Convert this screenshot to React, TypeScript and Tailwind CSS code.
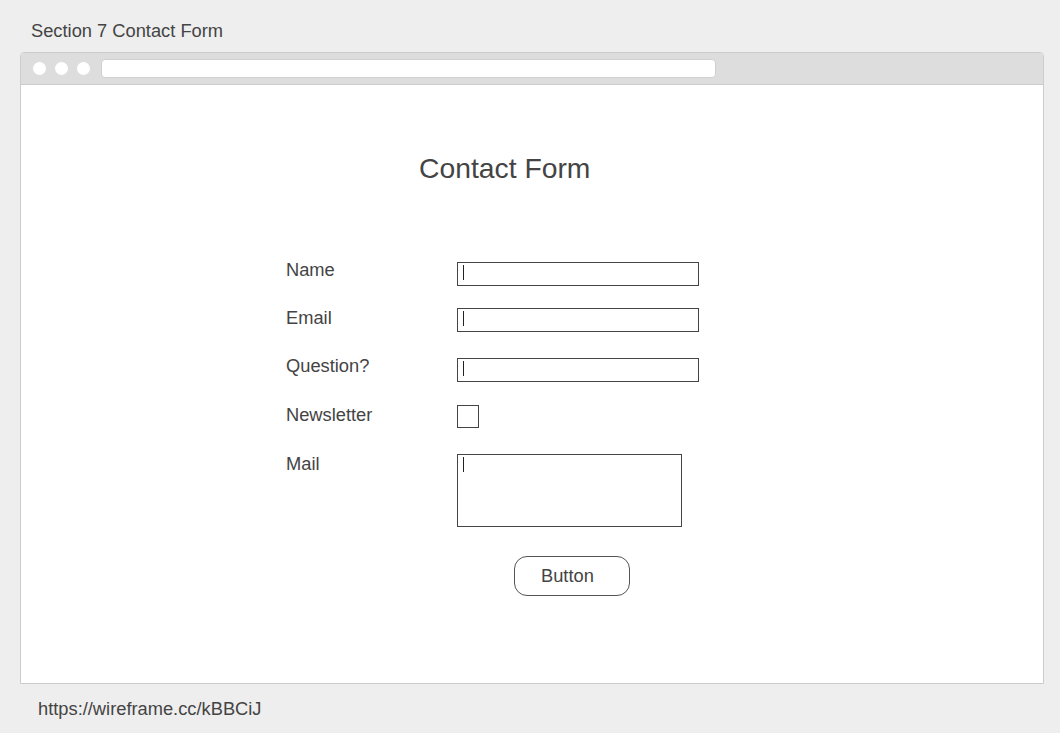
const font = { fontFamily: '"Liberation Sans", Arial, sans-serif' };

function Cursor() {
  return <span className="absolute left-[5px] top-[2px] h-[15px] w-px bg-[#222]" />;
}

function TextInput() {
  return (
    <div className="relative h-[24px] w-[242px] border border-[#444] bg-white">
      <Cursor />
    </div>
  );
}

function FormRow({
  label,
  children,
  className = "",
  labelOffset = "-mt-px",
}: {
  label: string;
  children: React.ReactNode;
  className?: string;
  labelOffset?: string;
}) {
  return (
    <div className={`flex items-start ${className}`}>
      <div className={`w-[171px] text-[18.3px] leading-[20px] text-[#444] ${labelOffset}`}>{label}</div>
      {children}
    </div>
  );
}

export default function App() {
  return (
    <div className="min-h-[733px] w-[1060px] bg-[#eeeeee] text-[#444]" style={font}>
      <div className="pl-[31px] pt-[21px] text-[18.3px] leading-[20px]">Section 7 Contact Form</div>

      <div className="ml-[20px] mt-[11px] w-[1024px] overflow-hidden rounded-t-[4px] border border-[#cccccc] bg-white">
        <div className="flex h-[32px] items-center border-b border-[#cccccc] bg-[#dddddd] pl-[12px]">
          <div className="flex gap-[9px]">
            <span className="h-[13px] w-[13px] rounded-full bg-white" />
            <span className="h-[13px] w-[13px] rounded-full bg-white" />
            <span className="h-[13px] w-[13px] rounded-full bg-white" />
          </div>
          <div className="ml-[11px] h-[19px] w-[615px] rounded-[4px] border border-[#d0d0d0] bg-white" />
        </div>

        <div className="h-[598px]">
          <div className="pl-[398px] pt-[67px] text-[28.3px] leading-[32px]">Contact Form</div>

          <div className="mt-[78px] pl-[265px]">
            <FormRow label="Name" labelOffset="-mt-[2px]">
              <TextInput />
            </FormRow>
            <FormRow label="Email" className="mt-[22px]" labelOffset="mt-0">
              <TextInput />
            </FormRow>
            <FormRow label="Question?" className="mt-[26px]" labelOffset="-mt-[2px]">
              <TextInput />
            </FormRow>
            <FormRow label="Newsletter" className="mt-[23px]" labelOffset="mt-0">
              <div className="h-[23px] w-[22px] border border-[#444] bg-white" />
            </FormRow>
            <FormRow label="Mail" className="mt-[26px]" labelOffset="mt-0">
              <div className="relative h-[73px] w-[225px] border border-[#444] bg-white">
                <Cursor />
              </div>
            </FormRow>
            <div className="mt-[29px] pl-[228px]">
              <button className="h-[40px] w-[116px] rounded-[13px] border border-[#555] bg-white pl-[26px] text-left text-[18.3px] leading-[20px] text-[#444]">
                Button
              </button>
            </div>
          </div>
        </div>
      </div>

      <div className="pl-[38px] pt-[15px] text-[18.3px] leading-[20px]">https://wireframe.cc/kBBCiJ</div>
    </div>
  );
}
